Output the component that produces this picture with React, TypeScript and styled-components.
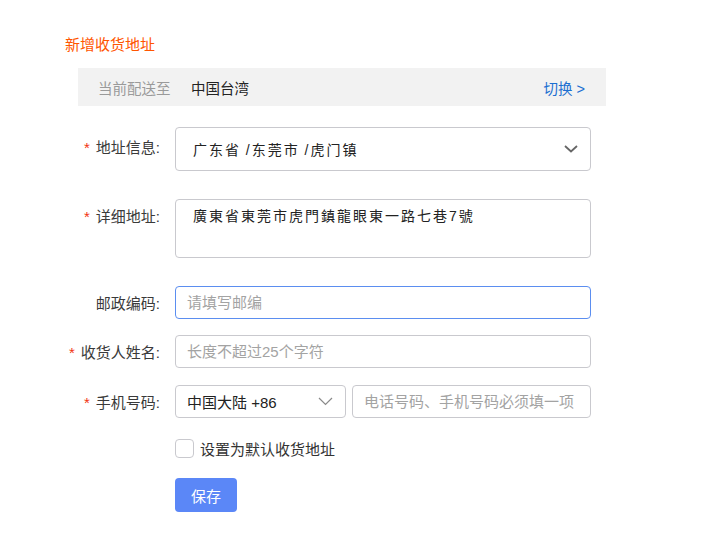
import styled, { createGlobalStyle } from 'styled-components';

const GlobalStyle = createGlobalStyle`
  body {
    margin: 0;
    background: #ffffff;
    font-family: 'Liberation Sans', 'Noto Sans CJK SC', sans-serif;
    color: #333333;
  }
`;

const FONT = `'Liberation Sans', 'Noto Sans CJK SC', sans-serif`;

function ChevronDown({ light }: { light?: boolean }) {
  return light ? (
    <svg width="15" height="9" viewBox="0 0 15 9" fill="none">
      <path d="M1 1l6.5 6.5L14 1" stroke="#8a8a8a" strokeWidth="1.2" />
    </svg>
  ) : (
    <svg width="14" height="8" viewBox="0 0 14 8" fill="none">
      <path d="M1 1l6 5.5L13 1" stroke="#666666" strokeWidth="1.8" />
    </svg>
  );
}

function App() {
  return (
    <>
      <GlobalStyle />
      <Page>
        <Title>新增收货地址</Title>
        <DeliveryBar>
          <BarLabel>当前配送至</BarLabel>
          <BarValue>中国台湾</BarValue>
          <SwitchLink>切换 &gt;</SwitchLink>
        </DeliveryBar>

        <Form>
          <Row $mt={21}>
            <Label $required $lift={3}>地址信息:</Label>
            <SelectBox $height={44}>
              <Spaced>广东省&thinsp;/东莞市&thinsp;/虎门镇</Spaced>
              <ChevronDown />
            </SelectBox>
          </Row>

          <Row $mt={28} $top>
            <Label $required $offset={6}>详细地址:</Label>
            <TextArea>
              <Spaced>廣東省東莞市虎門鎮龍眼東一路七巷7號</Spaced>
            </TextArea>
          </Row>

          <Row $mt={28}>
            <Label>邮政编码:</Label>
            <Input $focused placeholder="请填写邮编" />
          </Row>

          <Row $mt={16}>
            <Label $required>收货人姓名:</Label>
            <Input placeholder="长度不超过25个字符" />
          </Row>

          <Row $mt={17}>
            <Label $required>手机号码:</Label>
            <PhoneGroup>
              <SelectBox $height={33} $width={171} $pad={11}>
                <span>中国大陆 +86</span>
                <ChevronDown light />
              </SelectBox>
              <Input $fluid placeholder="电话号码、手机号码必须填一项" />
            </PhoneGroup>
          </Row>

          <Row $mt={20}>
            <Label />
            <CheckLine>
              <CheckBox />
              <span>设置为默认收货地址</span>
            </CheckLine>
          </Row>

          <Row $mt={19}>
            <Label />
            <SaveButton>保存</SaveButton>
          </Row>
        </Form>
      </Page>
    </>
  );
}

export default App;

const Page = styled.div`
  padding: 36px 0 0 65px;
  width: 541px;
`;

const Title = styled.div`
  font-size: 15px;
  line-height: 18px;
  color: #ff5500;
`;

const DeliveryBar = styled.div`
  display: flex;
  align-items: center;
  margin: 14px 0 0 13px;
  height: 38px;
  width: 528px;
  box-sizing: border-box;
  padding: 0 21px 0 20px;
  background: #f2f2f2;
  font-size: 14.5px;
`;

const BarLabel = styled.span`
  color: #9a9a9a;
  width: 93px;
`;

const BarValue = styled.span`
  color: #222222;
`;

const SwitchLink = styled.span`
  margin-left: auto;
  color: #1c6fd1;
`;

const Form = styled.div`
  display: flex;
  flex-direction: column;
`;

const Row = styled.div<{ $mt: number; $top?: boolean }>`
  display: flex;
  align-items: ${(p) => (p.$top ? 'flex-start' : 'center')};
  margin-top: ${(p) => p.$mt}px;
  gap: 15px;
`;

const Label = styled.div<{ $required?: boolean; $offset?: number; $lift?: number }>`
  width: 95px;
  flex-shrink: 0;
  text-align: right;
  font-size: 15px;
  color: #3a3a3a;
  white-space: nowrap;
  padding-top: ${(p) => p.$offset ?? 0}px;
  padding-bottom: ${(p) => (p.$lift ?? 0) * 2}px;
  &::before {
    content: ${(p) => (p.$required ? "'*'" : "''")};
    color: #f2330f;
    margin-right: 6px;
  }
`;

const SelectBox = styled.div<{ $height: number; $width?: number; $pad?: number }>`
  display: flex;
  align-items: center;
  justify-content: space-between;
  box-sizing: border-box;
  width: ${(p) => p.$width ?? 416}px;
  height: ${(p) => p.$height}px;
  padding: 0 12px 0 ${(p) => p.$pad ?? 17}px;
  border: 1px solid #c9c9ce;
  border-radius: 4px;
  font-size: 15px;
  color: #222222;
  flex-shrink: 0;
`;

const Spaced = styled.span`
  font-size: 14px;
  letter-spacing: 2px;
`;

const TextArea = styled.div`
  box-sizing: border-box;
  width: 416px;
  height: 59px;
  padding: 7px 17px;
  border: 1px solid #c9c9ce;
  border-radius: 4px;
  font-size: 14px;
  line-height: 18px;
  color: #222222;
`;

const Input = styled.input<{ $focused?: boolean; $fluid?: boolean }>`
  box-sizing: border-box;
  width: ${(p) => (p.$fluid ? 'auto' : '416px')};
  flex: ${(p) => (p.$fluid ? 1 : 'none')};
  min-width: 0;
  height: 33px;
  padding: 0 11px;
  border: 1px solid ${(p) => (p.$focused ? '#5b8ef0' : '#c9c9ce')};
  border-radius: 4px;
  font-family: ${FONT};
  font-size: 15px;
  color: #222222;
  outline: none;
  &::placeholder {
    color: #a3a3a3;
  }
`;

const PhoneGroup = styled.div`
  display: flex;
  gap: 6px;
  width: 416px;
`;

const CheckLine = styled.label`
  display: flex;
  align-items: center;
  gap: 6px;
  font-size: 15px;
  color: #333333;
`;

const CheckBox = styled.span`
  width: 19px;
  height: 19px;
  box-sizing: border-box;
  border: 1px solid #c9c9ce;
  border-radius: 4px;
  background: #ffffff;
`;

const SaveButton = styled.button`
  width: 62px;
  height: 34px;
  border: none;
  border-radius: 4px;
  background: #5b87f7;
  color: #ffffff;
  font-family: ${FONT};
  font-size: 15px;
  padding: 0;
`;
